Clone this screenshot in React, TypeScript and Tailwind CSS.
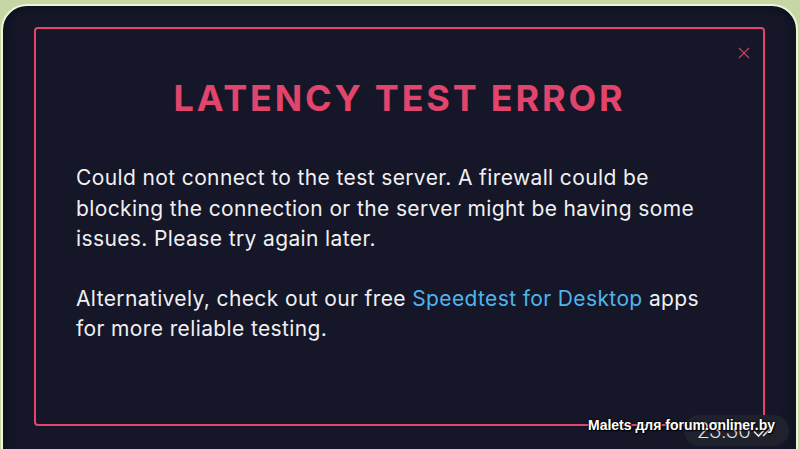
import React from "react";

export default function App() {
  return (
    <div className="w-[800px] h-[449px] overflow-hidden bg-[#c6d6a4] relative">
      <div className="ml-[1px] mt-[4px] w-[797px] h-[480px] rounded-[26px] border-2 border-[#eef4d8] bg-[#151728] shadow-[inset_0_0_14px_rgba(0,0,0,0.45)] pl-[31px] pt-[21px]">
        <div className="relative w-[731px] h-[399px] rounded-[4px] border-2 border-[#e2456b] flex flex-col">
          <svg className="absolute right-[13px] top-[18px]" width="12" height="12" viewBox="0 0 12 12">
            <path d="M1 1L11 11M11 1L1 11" stroke="#b8405f" strokeWidth="1.4" />
          </svg>
          <h1
            className="mt-[47px] text-center text-[36px] leading-[44px] font-bold text-[#e2456b] tracking-[2.8px]"
            style={{ fontFamily: "Inter, 'Noto Sans', sans-serif" }}
          >
            LATENCY TEST ERROR
          </h1>
          <div
            className="pl-[40px] mt-[43px] text-[21px] leading-[30.5px] tracking-[0.38px] text-[#f0f0f2]"
            style={{ fontFamily: "Inter, 'Noto Sans', sans-serif" }}
          >
            <p>
              Could not connect to the test server. A firewall could be
              <br />
              blocking the connection or the server might be having some
              <br />
              issues. Please try again later.
            </p>
            <p className="mt-[29px]">
              Alternatively, check out our free{" "}
              <span className="text-[#4fb4ee]">Speedtest for Desktop</span> apps
              <br />
              for more reliable testing.
            </p>
          </div>
        </div>
      </div>
      <div className="absolute left-[684px] top-[415px] w-[105px] h-[31px] rounded-[15px] bg-[#1f212d] flex items-center pl-[13px] gap-[3px]">
        <span
          className="text-[22px] leading-none font-light text-[#e6e6ea]"
          style={{ fontFamily: "Roboto, sans-serif" }}
        >
          23:36
        </span>
        <svg width="26" height="14" viewBox="0 0 26 14" fill="none">
          <path d="M1 7.5L5.5 12L15 2" stroke="#e6e6ea" strokeWidth="1.6" />
          <path d="M10 12L20 2" stroke="#e6e6ea" strokeWidth="1.6" />
        </svg>
      </div>
      <div
        className="absolute left-[588px] top-[417px] text-[14px] leading-[16px] font-bold text-white whitespace-nowrap [text-shadow:0_0_2px_#000,0_0_2px_#000,1px_1px_1px_#000]"
        style={{ fontFamily: "'Liberation Sans', Arial, sans-serif" }}
      >
        Malets для forum.onliner.by
      </div>
    </div>
  );
}
